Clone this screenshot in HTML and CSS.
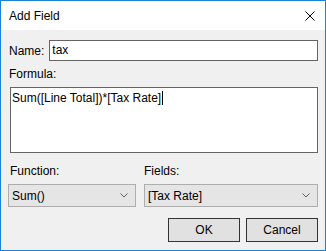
FILE: index.html
```html
<!DOCTYPE html>
<html lang="en">
<head>
  <meta charset="UTF-8">
  <title>Add Field</title>
  <link rel="stylesheet" href="styles.css">
</head>
<body>

  <!-- Окно диалога -->
  <div class="dialog">

    <div class="titlebar">
      <span class="title">Add Field</span>
      <svg class="close" width="10" height="10" viewBox="0 0 10 10">
        <path d="M0.5 0.5 L9.5 9.5 M9.5 0.5 L0.5 9.5" stroke="#000" stroke-width="1" fill="none"/>
      </svg>
    </div>

    <div class="content">

      <div class="name-row">
        <label class="label">Name:</label>
        <div class="textbox">tax</div>
      </div>

      <label class="label formula-label">Formula:</label>
      <div class="textarea">Sum([Line Total])*[Tax Rate]<span class="caret"></span></div>

      <div class="combo-row">
        <div class="combo-group function-group">
          <label class="label">Function:</label>
          <div class="combo">
            <span>Sum()</span>
            <svg width="8" height="5" viewBox="0 0 8 5">
              <path d="M0.5 0.5 L4 4 L7.5 0.5" stroke="#606060" stroke-width="1" fill="none"/>
            </svg>
          </div>
        </div>
        <div class="combo-group fields-group">
          <label class="label">Fields:</label>
          <div class="combo">
            <span>[Tax Rate]</span>
            <svg width="8" height="5" viewBox="0 0 8 5">
              <path d="M0.5 0.5 L4 4 L7.5 0.5" stroke="#606060" stroke-width="1" fill="none"/>
            </svg>
          </div>
        </div>
      </div>

      <div class="buttons">
        <button class="btn">OK</button>
        <button class="btn">Cancel</button>
      </div>

    </div>
  </div>

</body>
</html>
```

FILE: styles.css
```css
* {
  margin: 0;
  padding: 0;
  box-sizing: border-box;
}

body {
  font-family: "Liberation Sans", Arial, sans-serif;
  font-size: 12px;
  color: #000;
  background: #f0f0f0;
}

.dialog {
  width: 326px;
  height: 251px;
  border: 1px solid #1883d7;
  background-color: #f0f0f0;
  display: flex;
  flex-direction: column;
}

/* Заголовок окна */
.titlebar {
  height: 29px;
  background-color: #fff;
  display: flex;
  align-items: center;
  justify-content: space-between;
  padding: 0 10px 0 8px;
}

.title {
  font-size: 12px;
  margin-top: 0px;
}

.close {
  display: block;
  margin-top: 0px;
}

/* Содержимое */
.content {
  padding: 10px 7px 0 7px;
  display: flex;
  flex-direction: column;
}

.label {
  display: block;
  line-height: 14px;
}

.name-row {
  display: flex;
  align-items: center;
  gap: 5px;
  padding-left: 1px;
}

.textbox {
  flex-grow: 1;
  height: 21px;
  background-color: #fff;
  border: 1px solid #646464;
  padding: 2px 2px;
  line-height: 15px;
}

.formula-label {
  margin-top: 6px;
  padding-left: 1px;
}

.textarea {
  margin-top: 6px;
  margin-left: 2px;
  height: 66px;
  background-color: #fff;
  border: 1px solid #646464;
  padding: 3px 1px;
  line-height: 14px;
}

.caret {
  display: inline-block;
  width: 1px;
  height: 14px;
  background-color: #000;
  vertical-align: top;
  margin-left: 1px;
}

/* Выпадающие списки */
.combo-row {
  display: flex;
  gap: 8px;
  margin-top: 11px;
}

.combo-group {
  display: flex;
  flex-direction: column;
  gap: 6px;
}

.function-group {
  width: 128px;
}

.function-group .label {
  padding-left: 2px;
}

.fields-group {
  flex-grow: 1;
}

.combo {
  height: 23px;
  background-color: #e5e5e5;
  border: 1px solid #adadad;
  display: flex;
  align-items: center;
  justify-content: space-between;
  padding: 0 7px 0 3px;
}

/* Кнопки */
.buttons {
  display: flex;
  justify-content: flex-end;
  gap: 6px;
  margin-top: 11px;
}

.btn {
  width: 72px;
  height: 24px;
  font-family: inherit;
  font-size: 12px;
  background-color: #e1e1e1;
  border: 1px solid #333;
  color: #000;
}
```
